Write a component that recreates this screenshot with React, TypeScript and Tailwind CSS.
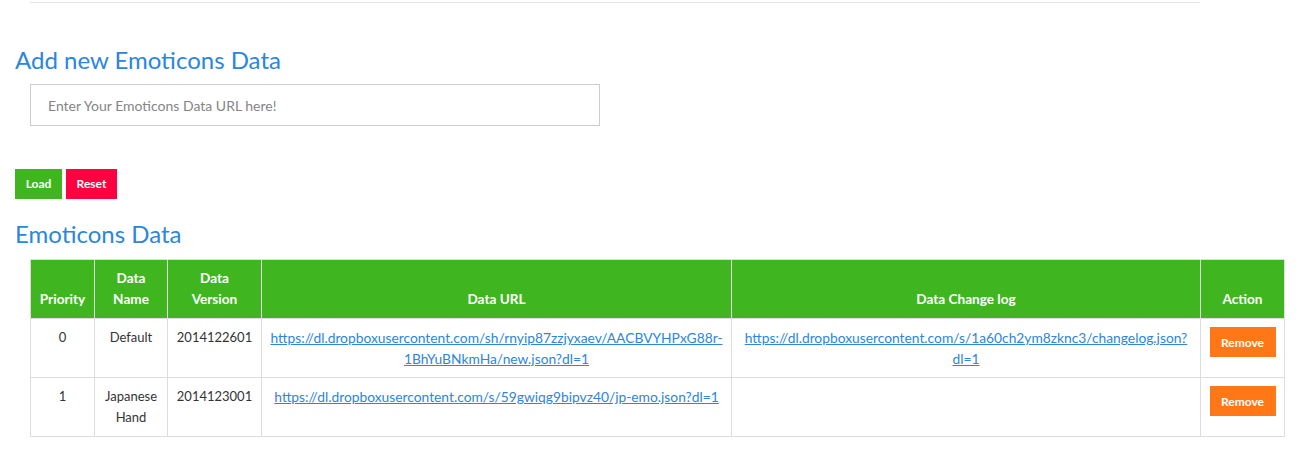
import React from "react";

type Row = {
  priority: number;
  name: React.ReactNode;
  version: string;
  url: React.ReactNode;
  log?: React.ReactNode;
};

const rows: Row[] = [
  {
    priority: 0,
    name: "Default",
    version: "2014122601",
    url: (
      <>
        https://dl.dropboxusercontent.com/sh/rnyip87zzjyxaev/AACBVYHPxG88r-
        <br />
        1BhYuBNkmHa/new.json?dl=1
      </>
    ),
    log: (
      <>
        https://dl.dropboxusercontent.com/s/1a60ch2ym8zknc3/changelog.json?
        <br />
        dl=1
      </>
    ),
  },
  {
    priority: 1,
    name: (
      <>
        Japanese
        <br />
        Hand
      </>
    ),
    version: "2014123001",
    url: "https://dl.dropboxusercontent.com/s/59gwiqg9bipvz40/jp-emo.json?dl=1",
  },
];

const th = "border border-[#dddddd] px-2 py-2 align-bottom text-center text-[13.6px] font-bold text-white";
const td = "border border-[#dddddd] px-2 py-2 align-top text-center text-[#333333]";
const tdLink = "border border-[#dddddd] px-2 py-2 align-top text-center text-[13.8px]";
const link = "text-[#2a86e0] underline";

export default function App() {
  return (
    <div className="min-h-[450px] bg-white pl-[15px] font-['Lato',sans-serif]">
      <div className="ml-[15px] w-[1170px] pt-[2px]">
        <div className="border-t border-[#e5e5e5]" />
      </div>

      <h2 className="mt-[44px] text-[24px] leading-[26px] text-[#2a86e0]">Add new Emoticons Data</h2>

      <div className="ml-[15px] mt-[11px]">
        <input
          className="h-[42px] w-[570px] border border-[#cccccc] px-[17px] text-[14px] text-[#555] outline-none placeholder:text-[#858585]"
          placeholder="Enter Your Emoticons Data URL here!"
        />
      </div>

      <div className="mt-[43px] flex gap-[4px]">
        <button className="h-[30px] w-[47px] bg-[#3fb61f] text-[12px] font-bold text-white">Load</button>
        <button className="h-[30px] w-[51px] bg-[#ff0040] text-[12px] font-bold text-white">Reset</button>
      </div>

      <h2 className="mt-[22px] text-[24px] leading-[26px] text-[#2a86e0]">Emoticons Data</h2>

      <div className="ml-[15px] mt-[12px]">
        <table className="w-[1254px] table-fixed border-collapse text-[13px] leading-[21px]">
          <colgroup>
            <col className="w-[64px]" />
            <col className="w-[73px]" />
            <col className="w-[94px]" />
            <col className="w-[470px]" />
            <col className="w-[469px]" />
            <col className="w-[84px]" />
          </colgroup>
          <thead>
            <tr className="bg-[#3fb61f]">
              <th className={th}>Priority</th>
              <th className={th}>
                Data
                <br />
                Name
              </th>
              <th className={th}>
                Data
                <br />
                Version
              </th>
              <th className={th}>Data URL</th>
              <th className={th}>Data Change log</th>
              <th className={th}>Action</th>
            </tr>
          </thead>
          <tbody>
            {rows.map((r) => (
              <tr key={r.priority}>
                <td className={td}>{r.priority}</td>
                <td className={td}>{r.name}</td>
                <td className={td}>{r.version}</td>
                <td className={tdLink}>
                  <a href="#" className={link}>
                    {r.url}
                  </a>
                </td>
                <td className={tdLink}>
                  {r.log && (
                    <a href="#" className={link}>
                      {r.log}
                    </a>
                  )}
                </td>
                <td className={td}>
                  <button className="h-[30px] w-[66px] bg-[#ff7716] text-[12px] font-bold text-white">Remove</button>
                </td>
              </tr>
            ))}
          </tbody>
        </table>
      </div>
    </div>
  );
}
